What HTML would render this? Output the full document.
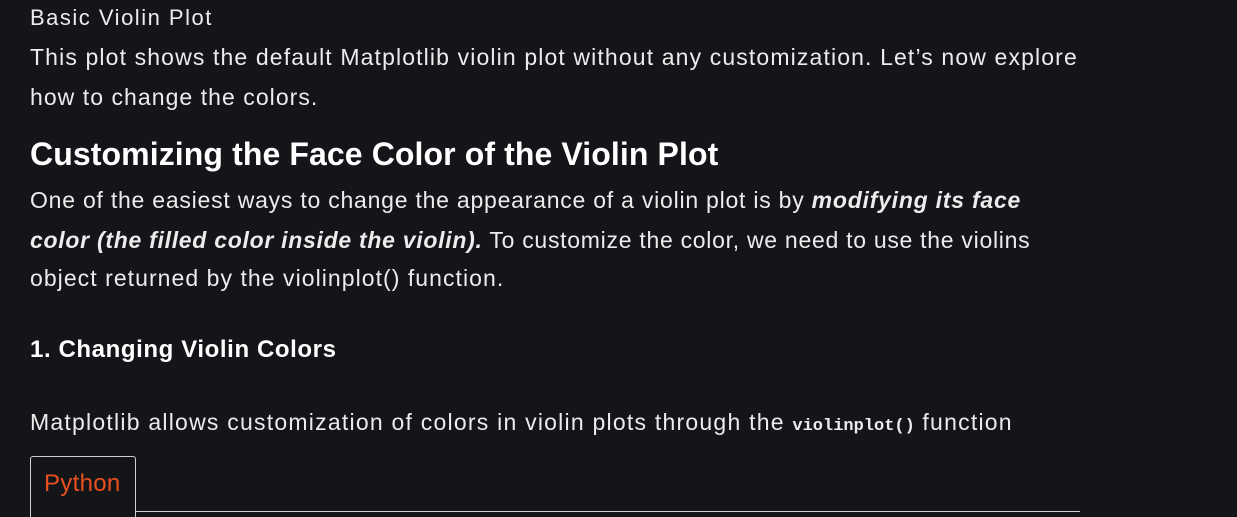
<!DOCTYPE html>
<html><head><style>
body{margin:0;background:#141519;color:#ececec;font-family:"Liberation Sans",sans-serif;width:1237px;height:515px;overflow:hidden;position:relative}
.t{position:absolute;left:30px;white-space:nowrap;font-size:23px;line-height:26px;letter-spacing:1.05px}
b i{font-weight:bold}
code{font-family:"Liberation Mono",monospace;font-size:17px;font-weight:bold;letter-spacing:0}
</style></head><body>
<div class="t" style="top:5px;font-size:22px;letter-spacing:1.5px">Basic Violin Plot</div>
<div class="t" style="top:44px;letter-spacing:1.13px">This plot shows the default Matplotlib violin plot without any customization. Let’s now explore</div>
<div class="t" style="top:84px">how to change the colors.</div>
<div class="t" style="top:136px;font-size:32px;line-height:36px;font-weight:bold;color:#fff;letter-spacing:0.1px">Customizing the Face Color of the Violin Plot</div>
<div class="t" style="top:187px;letter-spacing:0.77px">One of the easiest ways to change the appearance of a violin plot is by <b><i>modifying its face</i></b></div>
<div class="t" style="top:227px;letter-spacing:0.72px"><b><i>color (the filled color inside the violin).</i></b> To customize the color, we need to use the violins</div>
<div class="t" style="top:265px;letter-spacing:1.05px">object returned by the violinplot() function.</div>
<div class="t" style="top:337px;font-size:24px;font-weight:bold;color:#fff;letter-spacing:0.6px">1. Changing Violin Colors</div>
<div class="t" style="top:409px;letter-spacing:1.23px">Matplotlib allows customization of colors in violin plots through the <code>violinplot()</code> function</div>
<div style="position:absolute;left:30px;top:456px;width:104px;height:60px;border:1px solid #d0d0d0;border-bottom:none;border-radius:3px 3px 0 0"></div>
<div style="position:absolute;left:135px;top:511px;width:945px;height:1px;background:#d0d0d0"></div>
<div class="t" style="left:44px;top:471px;color:#e8501e;font-size:24px;letter-spacing:0.3px">Python</div>
</body></html>
